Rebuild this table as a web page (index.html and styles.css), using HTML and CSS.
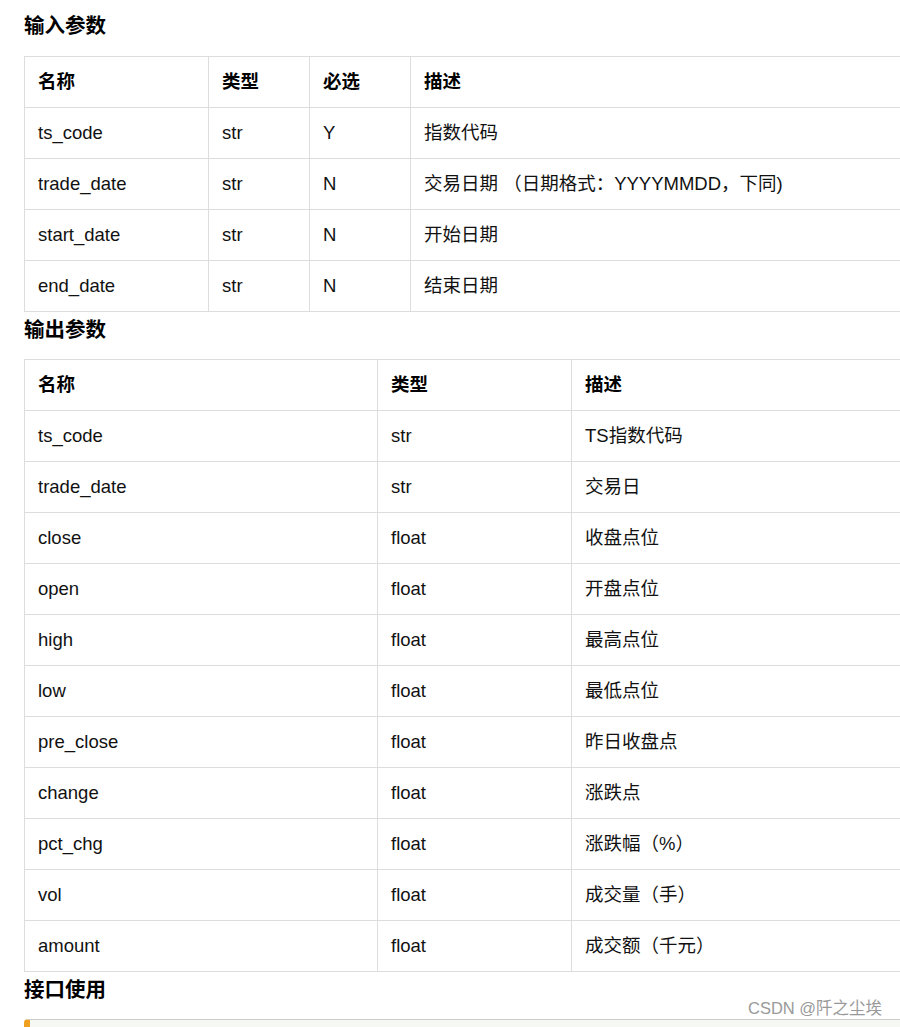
FILE: index.html
```html
<!DOCTYPE html>
<html lang="zh">
<head>
<meta charset="utf-8">
<link rel="stylesheet" href="styles.css">
</head>
<body>
<div class="page">
  <h4 class="title first">输入参数</h4>
  <table class="params in">
    <colgroup><col class="c1"><col class="c2"><col class="c3"><col></colgroup>
    <thead><tr><th>名称</th><th>类型</th><th>必选</th><th>描述</th></tr></thead>
    <tbody>
      <tr><td>ts_code</td><td>str</td><td>Y</td><td>指数代码</td></tr>
      <tr><td>trade_date</td><td>str</td><td>N</td><td>交易日期 （日期格式：YYYYMMDD，下同)</td></tr>
      <tr><td>start_date</td><td>str</td><td>N</td><td>开始日期</td></tr>
      <tr><td>end_date</td><td>str</td><td>N</td><td>结束日期</td></tr>
    </tbody>
  </table>
  <h4 class="title">输出参数</h4>
  <table class="params out">
    <colgroup><col class="d1"><col class="d2"><col></colgroup>
    <thead><tr><th>名称</th><th>类型</th><th>描述</th></tr></thead>
    <tbody>
      <tr><td>ts_code</td><td>str</td><td>TS指数代码</td></tr>
      <tr><td>trade_date</td><td>str</td><td>交易日</td></tr>
      <tr><td>close</td><td>float</td><td>收盘点位</td></tr>
      <tr><td>open</td><td>float</td><td>开盘点位</td></tr>
      <tr><td>high</td><td>float</td><td>最高点位</td></tr>
      <tr><td>low</td><td>float</td><td>最低点位</td></tr>
      <tr><td>pre_close</td><td>float</td><td>昨日收盘点</td></tr>
      <tr><td>change</td><td>float</td><td>涨跌点</td></tr>
      <tr><td>pct_chg</td><td>float</td><td>涨跌幅（%）</td></tr>
      <tr><td>vol</td><td>float</td><td>成交量（手）</td></tr>
      <tr><td>amount</td><td>float</td><td>成交额（千元）</td></tr>
    </tbody>
  </table>
  <h4 class="title">接口使用</h4>
  <div class="code"></div>
</div>
<div class="watermark">CSDN @阡之尘埃</div>
</body>
</html>
```
FILE: styles.css
```css
html, body {
  margin: 0;
  padding: 0;
  overflow: hidden;
  background: #fff;
}
body {
  font-family: "Liberation Sans", "Noto Sans CJK SC", sans-serif;
  color: #111;
  width: 900px;
  height: 1027px;
  position: relative;
}
.page {
  padding: 11px 0 0 24px;
}
.title {
  margin: 3px 0 14px;
  font-size: 20.5px;
  line-height: 30px;
  font-weight: bold;
  color: #000;
}
.title.first {
  margin-top: 0;
  margin-bottom: 15px;
}
.params {
  border-collapse: collapse;
  table-layout: fixed;
  width: 1000px;
  font-size: 18.5px;
}
.params th, .params td {
  border: 1px solid #ddd;
  padding: 0 13px;
  height: 50px;
  text-align: left;
  vertical-align: middle;
  white-space: nowrap;
  line-height: 22px;
}
.params th {
  font-weight: bold;
  color: #000;
}
.in .c1 { width: 184px; }
.in .c2 { width: 101px; }
.in .c3 { width: 101px; }
.out .d1 { width: 353px; }
.out .d2 { width: 194px; }
.code {
  height: 40px;
  background: #f6f8f4;
  border-top: 1px solid #ccc;
  border-left: 6px solid #f0a020;
  border-radius: 4px 0 0 0;
  width: 1000px;
}
.watermark {
  position: absolute;
  left: 748px;
  top: 997px;
  font-size: 16.5px;
  line-height: 22px;
  color: #999;
  font-family: "Liberation Sans", "Noto Sans CJK SC", sans-serif;
}
```
